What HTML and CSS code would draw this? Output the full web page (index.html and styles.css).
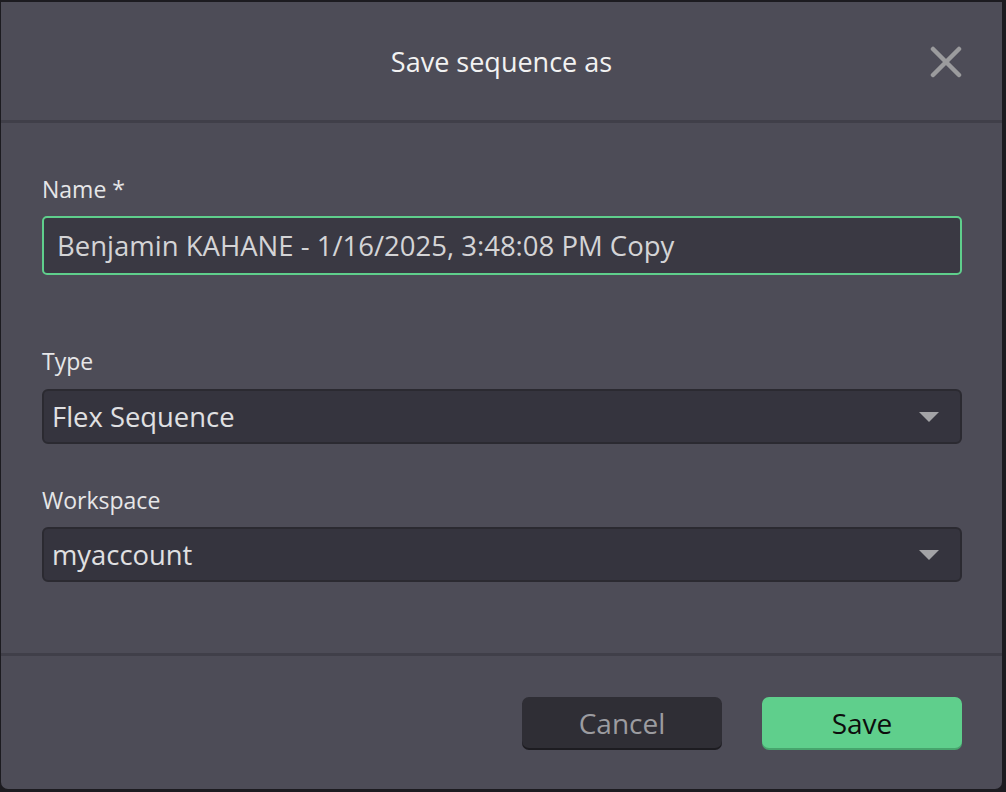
FILE: index.html
```html
<!DOCTYPE html>
<html lang="en">
<head>
  <meta charset="UTF-8" />
  <meta name="viewport" content="width=device-width, initial-scale=1.0"/>
  <title>Save sequence as</title>
  <link rel="stylesheet" href="styles.css">
</head>
<body>

  <div class="dialog">
    <div class="dialog-header">
      <p class="dialog-title">Save sequence as</p>
      <button class="close-btn" aria-label="Close">
        <svg width="32" height="32" viewBox="0 0 32 32">
          <path d="M3 3 L29 29 M29 3 L3 29" stroke="#9b9b9d" stroke-width="4.5" stroke-linecap="round" fill="none"/>
        </svg>
      </button>
    </div>

    <div class="dialog-body">
      <label class="field-label" for="seqName">Name *</label>
      <input type="text" id="seqName" class="text-input" value="Benjamin KAHANE - 1/16/2025, 3:48:08 PM Copy">

      <label class="field-label type-label">Type</label>
      <div class="select">
        <span>Flex Sequence</span>
        <span class="caret"></span>
      </div>

      <label class="field-label ws-label">Workspace</label>
      <div class="select">
        <span>myaccount</span>
        <span class="caret"></span>
      </div>
    </div>

    <div class="dialog-footer">
      <button class="btn btn-cancel">Cancel</button>
      <button class="btn btn-save">Save</button>
    </div>
  </div>

</body>
</html>
```

FILE: styles.css
```css
body {
  margin: 0;
  padding: 2px 0 0 1px;
  background-color: #1c1b20;
  font-family: "Open Sans", "Noto Sans", sans-serif;
  height: 792px;
  box-sizing: border-box;
  overflow: hidden;
}

.dialog {
  width: 1001px;
  height: 787px;
  background-color: #4d4c57;
  border-radius: 0 0 7px 7px;
  display: flex;
  flex-direction: column;
}

.dialog-header {
  height: 118px;
  flex-shrink: 0;
  border-bottom: 3px solid #403f49;
  display: flex;
  align-items: center;
  justify-content: center;
  position: relative;
}

.dialog-title {
  margin: 0;
  color: #f2f2f2;
  font-size: 27px;
}

.close-btn {
  position: absolute;
  right: 40px;
  top: 44px;
  padding: 0;
  background: none;
  border: none;
  cursor: pointer;
  display: flex;
}

.dialog-body {
  padding: 54px 40px 71px 41px;
  display: flex;
  flex-direction: column;
  flex-shrink: 0;
  border-bottom: 3px solid #403f49;
}

.field-label {
  color: #e6e6e8;
  font-size: 23px;
  line-height: 24px;
  margin-bottom: 15px;
}

.type-label {
  margin-top: 74px;
  margin-bottom: 16px;
}

.ws-label {
  margin-top: 44px;
}

.text-input {
  height: 59px;
  box-sizing: border-box;
  margin: 0;
  padding: 0 13px;
  background-color: #3a3943;
  border: 2px solid #5fcf8c;
  border-radius: 5px;
  color: #d4d4d6;
  font-family: inherit;
  font-size: 27.5px;
  outline: none;
}

.select {
  height: 55px;
  box-sizing: border-box;
  padding: 0 21px 0 8px;
  background-color: #35343e;
  border: 2px solid #2b2a31;
  border-radius: 6px;
  color: #e0e0e2;
  font-size: 27.4px;
  display: flex;
  align-items: center;
  justify-content: space-between;
}

.caret {
  width: 0;
  height: 0;
  border-left: 10px solid transparent;
  border-right: 10px solid transparent;
  border-top: 10px solid #a3a3a6;
}

.dialog-footer {
  flex: 1;
  display: flex;
  justify-content: flex-end;
  align-items: flex-start;
  gap: 40px;
  padding: 41px 40px 0 0;
}

.btn {
  width: 200px;
  height: 51px;
  border: none;
  border-radius: 7px;
  font-family: inherit;
  font-size: 28px;
  cursor: pointer;
}

.btn-cancel {
  background-color: #2f2e35;
  color: #9c9ca0;
  box-shadow: 0 2px 0 #1d1c21;
}

.btn-save {
  background-color: #5fcf8c;
  color: #0d0d0d;
  box-shadow: 0 2px 0 #47a56d;
}
```
